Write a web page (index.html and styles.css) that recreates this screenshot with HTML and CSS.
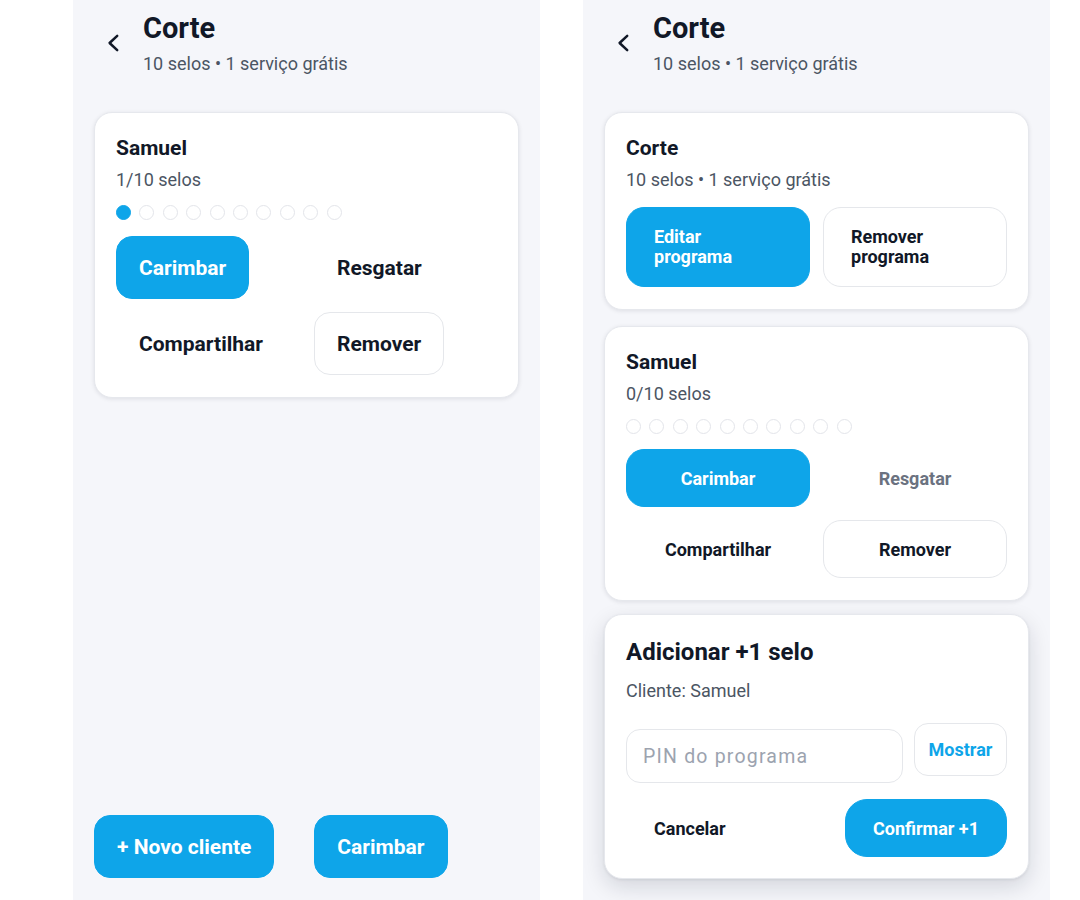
FILE: index.html
```html
<!DOCTYPE html>
<html lang="pt-BR">
<head>
<meta charset="utf-8">
<title>Corte</title>
<link rel="stylesheet" href="styles.css">
</head>
<body>
<div class="stage">
  <section class="screen">
    <header class="top">
      <svg class="back" viewBox="0 0 12 18" width="12" height="18" aria-hidden="true"><path d="M10.2 1.8 L2.6 9 L10.2 16.2" fill="none" stroke="#111827" stroke-width="2.5" stroke-linecap="round" stroke-linejoin="round"/></svg>
      <div class="top-text">
        <h1 class="title">Corte</h1>
        <p class="subtitle">10 selos • 1 serviço grátis</p>
      </div>
    </header>
    <div class="list">
      <article class="card card-lg">
        <h2 class="card-title">Samuel</h2>
        <p class="meta">1/10 selos</p>
        <div class="dots">
          <span class="dot on"></span><span class="dot"></span><span class="dot"></span><span class="dot"></span><span class="dot"></span><span class="dot"></span><span class="dot"></span><span class="dot"></span><span class="dot"></span><span class="dot"></span>
        </div>
        <div class="actions-auto">
          <button class="btn btn-lg primary">Carimbar</button>
          <button class="btn btn-lg ghost">Resgatar</button>
          <button class="btn btn-lg ghost">Compartilhar</button>
          <button class="btn btn-lg outline">Remover</button>
        </div>
      </article>
    </div>
    <footer class="bottom">
      <button class="btn btn-lg primary">+ Novo cliente</button>
      <button class="btn btn-lg primary">Carimbar</button>
    </footer>
  </section>

  <section class="screen">
    <header class="top">
      <svg class="back" viewBox="0 0 12 18" width="12" height="18" aria-hidden="true"><path d="M10.2 1.8 L2.6 9 L10.2 16.2" fill="none" stroke="#111827" stroke-width="2.5" stroke-linecap="round" stroke-linejoin="round"/></svg>
      <div class="top-text">
        <h1 class="title">Corte</h1>
        <p class="subtitle">10 selos • 1 serviço grátis</p>
      </div>
    </header>
    <div class="list">
      <article class="card">
        <h2 class="card-title">Corte</h2>
        <p class="meta">10 selos • 1 serviço grátis</p>
        <div class="actions-grid mt-prog">
          <button class="btn btn-prog primary">Editar programa</button>
          <button class="btn btn-prog outline">Remover programa</button>
        </div>
      </article>
      <article class="card">
        <h2 class="card-title">Samuel</h2>
        <p class="meta">0/10 selos</p>
        <div class="dots">
          <span class="dot"></span><span class="dot"></span><span class="dot"></span><span class="dot"></span><span class="dot"></span><span class="dot"></span><span class="dot"></span><span class="dot"></span><span class="dot"></span><span class="dot"></span>
        </div>
        <div class="actions-grid">
          <button class="btn btn-md primary">Carimbar</button>
          <button class="btn btn-md ghost disabled">Resgatar</button>
          <button class="btn btn-md ghost">Compartilhar</button>
          <button class="btn btn-md outline">Remover</button>
        </div>
      </article>
      <article class="card dialog">
        <h2 class="dialog-title">Adicionar +1 selo</h2>
        <p class="meta client">Cliente: Samuel</p>
        <div class="pin-row">
          <input class="pin" type="password" placeholder="PIN do programa">
          <button class="btn show">Mostrar</button>
        </div>
        <div class="dialog-actions">
          <button class="btn btn-md ghost cancel">Cancelar</button>
          <button class="btn btn-md primary confirm">Confirmar +1</button>
        </div>
      </article>
    </div>
  </section>
</div>
</body>
</html>
```

FILE: styles.css
```css
* { box-sizing: border-box; }

html, body {
  margin: 0;
  padding: 0;
  background: #ffffff;
  font-family: Roboto, "Noto Sans", "Liberation Sans", sans-serif;
  color: #111827;
}

.stage {
  display: flex;
  gap: 43px;
  padding-left: 73px;
  height: 900px;
  overflow: hidden;
}

.screen {
  width: 467px;
  height: 900px;
  background: #f5f6fa;
  display: flex;
  flex-direction: column;
  padding: 0 21px 22px;
}

.top {
  display: flex;
  align-items: flex-start;
  padding: 11px 0 0 13px;
}

.back {
  margin-top: 23px;
  margin-right: 24px;
  flex: none;
}

.title {
  margin: 0;
  font-size: 29px;
  line-height: 34px;
  font-weight: 700;
  color: #111827;
}

.subtitle {
  margin: 7px 0 0;
  font-size: 18px;
  line-height: 24px;
  color: #4b5563;
}

.list {
  margin-top: 36px;
  display: flex;
  flex-direction: column;
  gap: 16px;
}

.card {
  background: #ffffff;
  border: 1px solid #e6e8ed;
  border-radius: 18px;
  padding: 22px 21px 22px;
  box-shadow: 0 1px 4px rgba(15, 23, 42, 0.10);
}

.card-title {
  margin: 0;
  font-size: 21px;
  line-height: 26px;
  font-weight: 700;
  color: #111827;
}

.meta {
  margin: 7px 0 0;
  font-size: 18px;
  line-height: 24px;
  color: #4b5563;
}

.dots {
  display: flex;
  gap: 8.4px;
  margin-top: 13px;
}

.dot {
  width: 15px;
  height: 15px;
  border-radius: 50%;
  border: 1.5px solid #e3e5ea;
  background: #ffffff;
}

.dot.on {
  background: #0ea5e9;
  border-color: #0ea5e9;
}

.btn {
  font-family: Roboto, "Noto Sans", "Liberation Sans", sans-serif;
  font-weight: 700;
  border: 1px solid transparent;
  background: transparent;
  color: #111827;
  display: flex;
  align-items: center;
  justify-content: center;
  white-space: nowrap;
  margin: 0;
  cursor: pointer;
}

.primary {
  background: #0ea5e9;
  border-color: #0ea5e9;
  color: #ffffff;
}

.outline {
  background: #ffffff;
  border-color: #e5e7eb;
}

.ghost { background: transparent; }

.disabled { color: #6b7280; }

.btn-lg {
  height: 63px;
  padding: 0 22px;
  font-size: 21px;
  border-radius: 16px;
}

.btn-md {
  height: 58px;
  padding: 0 26px;
  font-size: 18px;
  border-radius: 18px;
}

.btn-prog {
  height: 80px;
  padding: 0 27px;
  font-size: 18px;
  line-height: 20px;
  border-radius: 18px;
  white-space: normal;
  justify-content: flex-start;
  text-align: left;
}

.actions-auto {
  margin-top: 16px;
  display: grid;
  grid-template-columns: auto auto;
  justify-content: start;
  justify-items: start;
  column-gap: 28px;
  row-gap: 13px;
}

.actions-auto .ghost:nth-child(2) { justify-self: stretch; }

.actions-grid {
  margin-top: 15px;
  display: grid;
  grid-template-columns: 1fr 1fr;
  column-gap: 13px;
  row-gap: 13px;
}

.actions-grid.mt-prog { margin-top: 15px; }

.bottom {
  margin-top: auto;
  display: flex;
  gap: 40px;
}

.dialog {
  margin-top: -3px;
  padding-bottom: 21px;
  box-shadow: 0 8px 22px rgba(15, 23, 42, 0.14), 0 1px 3px rgba(15, 23, 42, 0.08);
}

.dialog-title {
  margin: 0;
  font-size: 24px;
  line-height: 30px;
  font-weight: 700;
  color: #111827;
}

.client { margin-top: 12px; }

.pin-row {
  margin-top: 20px;
  display: flex;
  align-items: flex-start;
  gap: 11px;
}

.pin {
  flex: 1;
  min-width: 0;
  height: 54px;
  margin-top: 6px;
  border: 1px solid #e5e7eb;
  border-radius: 14px;
  background: #ffffff;
  padding: 0 16px;
  font-family: Roboto, "Noto Sans", "Liberation Sans", sans-serif;
  font-size: 19.5px;
  letter-spacing: 1.2px;
  color: #111827;
  outline: none;
}

.pin::placeholder { color: #9ca3af; }

.show {
  width: 93px;
  height: 53px;
  padding: 0;
  border-color: #e5e7eb;
  background: #ffffff;
  color: #0ea5e9;
  font-size: 18px;
  border-radius: 14px;
}

.dialog-actions {
  margin-top: 16px;
  display: flex;
  justify-content: space-between;
}

.cancel { padding: 0 27px; }

.confirm {
  width: 162px;
  padding: 0;
  border-radius: 22px;
}
```
